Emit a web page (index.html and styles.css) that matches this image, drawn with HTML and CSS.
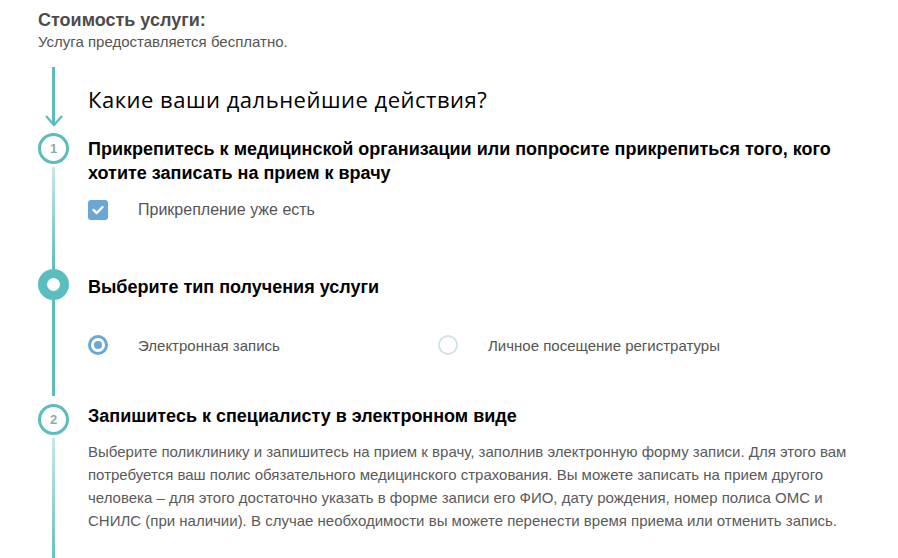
FILE: index.html
```html
<!DOCTYPE html>
<html lang="ru">
<head>
<meta charset="utf-8">
<link rel="stylesheet" href="styles.css">
</head>
<body>
<div class="page">
  <div class="cost">
    <div class="cost-title">Стоимость услуги:</div>
    <div class="cost-text">Услуга предоставляется бесплатно.</div>
  </div>

  <div class="timeline">
    <div class="row intro">
      <div class="marker">
        <div class="line solid grow"></div>
        <svg class="arrow" width="20" height="12" viewBox="0 0 20 12"><path d="M2 1 L10 10 L18 1" fill="none" stroke="#5bbdbd" stroke-width="2.2"/></svg>
      </div>
      <div class="content">
        <h1 class="title">Какие ваши дальнейшие действия?</h1>
      </div>
    </div>

    <div class="row step1">
      <div class="marker">
        <div class="circle">1</div>
        <div class="line fade grow"></div>
      </div>
      <div class="content">
        <h2 class="step-title">Прикрепитесь к медицинской организации или попросите прикрепиться того, кого хотите записать на прием к врачу</h2>
        <label class="check">
          <span class="checkbox"><svg width="12" height="10" viewBox="0 0 12 10"><path d="M1.5 5 L4.8 8 L10.5 2" fill="none" stroke="#fff" stroke-width="2.4" stroke-linecap="round" stroke-linejoin="round"/></svg></span>
          <span class="opt-label big">Прикрепление уже есть</span>
        </label>
      </div>
    </div>

    <div class="row step2">
      <div class="marker">
        <div class="circle active"></div>
        <div class="line solid grow"></div>
      </div>
      <div class="content">
        <h2 class="step-title">Выберите тип получения услуги</h2>
        <div class="radios">
          <label class="radio-opt">
            <span class="radio checked"></span>
            <span class="opt-label">Электронная запись</span>
          </label>
          <label class="radio-opt">
            <span class="radio"></span>
            <span class="opt-label">Личное посещение регистратуры</span>
          </label>
        </div>
      </div>
    </div>

    <div class="row step3">
      <div class="marker">
        <div class="circle">2</div>
        <div class="line fade grow"></div>
      </div>
      <div class="content">
        <h2 class="step-title">Запишитесь к специалисту в электронном виде</h2>
        <p class="desc">Выберите поликлинику и запишитесь на прием к врачу, заполнив электронную форму записи. Для этого вам потребуется ваш полис обязательного медицинского страхования. Вы можете записать на прием другого человека – для этого достаточно указать в форме записи его ФИО, дату рождения, номер полиса ОМС и СНИЛС (при наличии). В случае необходимости вы можете перенести время приема или отменить запись.</p>
      </div>
    </div>
  </div>
</div>
</body>
</html>
```

FILE: styles.css
```css
* { box-sizing: border-box; }
html, body { margin: 0; padding: 0; background: #fff; }
body {
  font-family: "Liberation Sans", Arial, sans-serif;
  color: #000;
  width: 898px;
  height: 558px;
  overflow: hidden;
}
.page { padding: 10px 0 0 38px; }

.cost-title {
  font-size: 18px;
  font-weight: bold;
  color: #4c4c4c;
  line-height: 20px;
}
.cost-text {
  font-size: 15px;
  color: #555;
  line-height: 18px;
  margin-top: 3px;
}

.timeline { margin-top: 16px; }

.row {
  display: grid;
  grid-template-columns: 31px 1fr;
  column-gap: 19px;
}
.marker {
  display: flex;
  flex-direction: column;
  align-items: center;
}
.grow { flex: 1; }
.line { width: 3px; }
.line.solid { background: #5bbdbd; }
.line.fade { background: linear-gradient(#c8e8e8, #5bbdbd); }

.intro .line { margin-bottom: -10px; }
.arrow { display: block; margin-bottom: 6px; }

.circle {
  width: 31px;
  height: 31px;
  border-radius: 50%;
  border: 3px solid #5bbdbd;
  display: flex;
  align-items: center;
  justify-content: center;
  font-size: 13px;
  font-weight: bold;
  color: #8fa9a9;
  flex: none;
  margin-bottom: 3px;
}
.circle.active {
  border-width: 9px;
}
.row.step2 .circle { margin-bottom: 0; }
.row.step2 .line { margin-bottom: 4px; }
.row.step3 .circle { margin-top: 4px; }

.content { padding-right: 40px; }
.row.step3 .content { padding-bottom: 40px; }

.title {
  font-family: "Open Sans", sans-serif;
  font-weight: normal;
  font-size: 22px;
  letter-spacing: 0.5px;
  line-height: 28px;
  margin: 18px 0 20px 0;
  color: #000;
}

.step-title {
  font-size: 18px;
  font-weight: bold;
  line-height: 24px;
  margin: 0;
  padding-top: 4px;
}
.row.step2 .step-title { padding-top: 6px; }

.check {
  display: flex;
  align-items: center;
  margin-top: 15px;
  padding-bottom: 49px;
}
.checkbox {
  width: 20px;
  height: 20px;
  border-radius: 3px;
  background: #6aa7d5;
  display: flex;
  align-items: center;
  justify-content: center;
  flex: none;
}
.opt-label {
  font-size: 15px;
  color: #555;
  margin-left: 30px;
}
.opt-label.big { font-size: 16px; }

.radios {
  display: flex;
  margin-top: 36px;
  padding-bottom: 45px;
}
.radio-opt {
  display: flex;
  align-items: center;
  width: 350px;
}
.radio {
  width: 20px;
  height: 20px;
  border-radius: 50%;
  border: 2px solid #d2e3e6;
  flex: none;
  position: relative;
}
.radio.checked {
  border: 3px solid #6aa7d5;
}
.radio.checked::after {
  content: "";
  position: absolute;
  left: 3px; top: 3px;
  width: 8px; height: 8px;
  border-radius: 50%;
  background: #6aa7d5;
}

.desc {
  margin: 12px 0 0 0;
  font-size: 15px;
  line-height: 23px;
  color: #5a5a5a;
  width: 770px;
}
```
